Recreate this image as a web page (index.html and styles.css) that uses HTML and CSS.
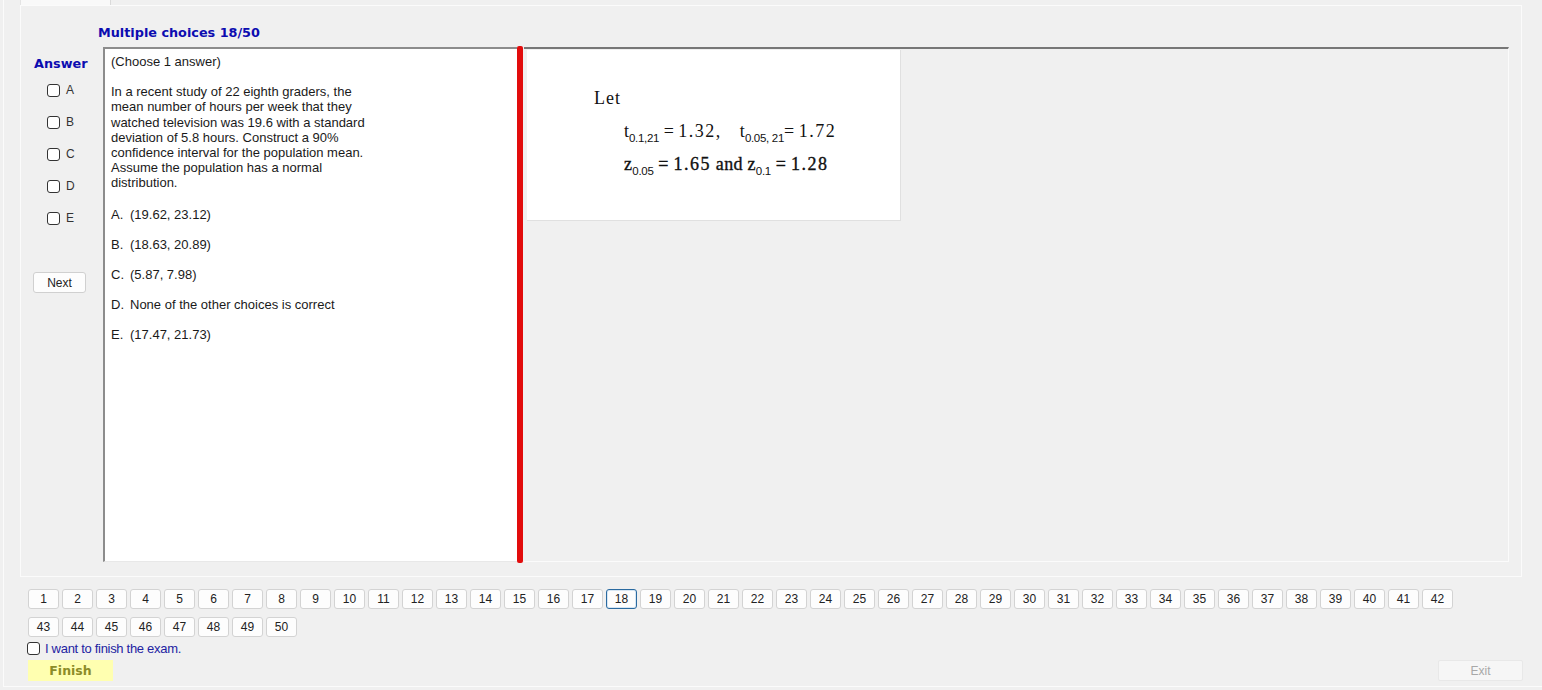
FILE: index.html
```html
<!DOCTYPE html>
<html>
<head>
<meta charset="utf-8">
<link rel="stylesheet" href="styles.css">
</head>
<body>
<div class="app">
  <div class="tabstrip"><div class="tab"></div></div>
  <div class="tabpage">
    <div class="title">Multiple choices 18/50</div>
    <div class="main">
      <div class="answers">
        <div class="answer-label">Answer</div>
        <div class="choice"><span class="box"></span><span>A</span></div>
        <div class="choice"><span class="box"></span><span>B</span></div>
        <div class="choice"><span class="box"></span><span>C</span></div>
        <div class="choice"><span class="box"></span><span>D</span></div>
        <div class="choice"><span class="box"></span><span>E</span></div>
        <div class="next">Next</div>
      </div>
      <div class="question">
        <p class="hint">(Choose 1 answer)</p>
        <p class="stem">In a recent study of 22 eighth graders, the<br>mean number of hours per week that they<br>watched television was 19.6 with a standard<br>deviation of 5.8 hours. Construct a 90%<br>confidence interval for the population mean.<br>Assume the population has a normal<br>distribution.</p>
        <div class="opt"><span class="letter">A.</span>(19.62, 23.12)</div>
        <div class="opt"><span class="letter">B.</span>(18.63, 20.89)</div>
        <div class="opt"><span class="letter">C.</span>(5.87, 7.98)</div>
        <div class="opt"><span class="letter">D.</span>None of the other choices is correct</div>
        <div class="opt"><span class="letter">E.</span>(17.47, 21.73)</div>
      </div>
      <div class="splitter"></div>
      <div class="pane">
        <div class="figure">
          <div class="let">Let</div>
          <div class="formula">t<sub>0.1,21</sub> = <span class="num">1.32,</span><span class="gap"></span>t<sub>0.05, 21</sub>= <span class="num">1.72</span></div>
          <div class="formula heavy">z<sub>0.05</sub> = <span class="num">1.65</span> and z<sub>0.1</sub> = <span class="num">1.28</span></div>
        </div>
      </div>
    </div>
  </div>
  <div class="nav">
    <div class="qbtn">1</div><div class="qbtn">2</div><div class="qbtn">3</div><div class="qbtn">4</div><div class="qbtn">5</div><div class="qbtn">6</div><div class="qbtn">7</div><div class="qbtn">8</div><div class="qbtn">9</div><div class="qbtn">10</div>
    <div class="qbtn">11</div><div class="qbtn">12</div><div class="qbtn">13</div><div class="qbtn">14</div><div class="qbtn">15</div><div class="qbtn">16</div><div class="qbtn">17</div><div class="qbtn current">18</div><div class="qbtn">19</div><div class="qbtn">20</div>
    <div class="qbtn">21</div><div class="qbtn">22</div><div class="qbtn">23</div><div class="qbtn">24</div><div class="qbtn">25</div><div class="qbtn">26</div><div class="qbtn">27</div><div class="qbtn">28</div><div class="qbtn">29</div><div class="qbtn">30</div>
    <div class="qbtn">31</div><div class="qbtn">32</div><div class="qbtn">33</div><div class="qbtn">34</div><div class="qbtn">35</div><div class="qbtn">36</div><div class="qbtn">37</div><div class="qbtn">38</div><div class="qbtn">39</div><div class="qbtn">40</div>
    <div class="qbtn">41</div><div class="qbtn">42</div><div class="qbtn">43</div><div class="qbtn">44</div><div class="qbtn">45</div><div class="qbtn">46</div><div class="qbtn">47</div><div class="qbtn">48</div><div class="qbtn">49</div><div class="qbtn">50</div>
  </div>
  <div class="confirm"><span class="box"></span><span>I want to finish the exam.</span></div>
  <div class="actions">
    <div class="finish">Finish</div>
    <div class="exit">Exit</div>
  </div>
</div>
</body>
</html>
```
FILE: styles.css
```css
* { box-sizing: border-box; }
html, body { margin: 0; padding: 0; }
body {
  background: #f0f0f0;
  font-family: "Liberation Sans", Arial, sans-serif;
  font-size: 12px;
  color: #1e1e1e;
  width: 1542px;
  height: 690px;
  overflow: hidden;
}
.app {
  margin-left: 3px;
  width: 1539px;
  height: 687px;
  border-left: 1px solid #fbfbfb;
  border-bottom: 1px solid #fbfbfb;
}
.tabstrip { height: 5px; }
.tab {
  margin-left: 16px;
  width: 91px;
  height: 5px;
  background: #f9f9f9;
  border-right: 1px solid #dadada;
  border-left: 1px solid #e4e4e4;
}
.tabpage {
  margin-left: 16px;
  width: 1502px;
  height: 572px;
  border: 1px solid #fbfbfb;
}
.title {
  margin: 19px 0 0 77px;
  height: 22px;
  font-family: "DejaVu Sans", Verdana, sans-serif;
  font-weight: bold;
  font-size: 12.8px;
  line-height: 15px;
  color: #0c0cb0;
}
.main {
  display: flex;
  height: 515px;
}
.answers {
  width: 82px;
  display: flex;
  flex-direction: column;
}
.answer-label {
  margin: 9px 0 3px 13px;
  font-family: "DejaVu Sans", Verdana, sans-serif;
  font-weight: bold;
  font-size: 12.8px;
  line-height: 15px;
  color: #0c0cb0;
}
.choice {
  height: 32px;
  display: flex;
  align-items: center;
  gap: 6px;
  padding-left: 26px;
  color: #333;
}
.box {
  display: inline-block;
  width: 13px;
  height: 13px;
  border: 1px solid #333;
  border-radius: 3px;
  background: #fff;
}
.next {
  margin: 38px 0 0 12px;
  width: 53px;
  height: 21px;
  line-height: 20px;
  text-align: center;
  background: #fdfdfd;
  border: 1px solid #d0d0d0;
  border-radius: 3px;
  color: #222;
  font-size: 12px;
}
.question {
  width: 414px;
  background: #fff;
  border-left: 2px solid #8c8c8c;
  border-top: 2px solid #8c8c8c;
  border-bottom: 1px solid #e8e8e8;
  padding: 5px 0 0 6px;
  line-height: 15.2px;
  font-size: 13px;
  color: #1a1a1a;
}
.question p { margin: 0 0 15px 0; }
.opt {
  height: 30.2px;
  line-height: 15px;
  padding-top: 1px;
}
.letter {
  display: inline-block;
  width: 19px;
}
.splitter {
  width: 6px;
  margin-top: -1px;
  margin-bottom: -1px;
  background: #e20c0c;
  border-radius: 2px;
}
.pane {
  width: 985px;
  border-top: 2px solid #777;
  border-right: 1px solid #fbfbfb;
  border-bottom: 1px solid #fbfbfb;
  margin-left: 1px;
  padding: 1px 0 0 3px;
}
.figure {
  width: 374px;
  height: 171px;
  background: #fff;
  border-right: 1px solid #e0e0e0;
  border-bottom: 1px solid #e0e0e0;
  font-family: "Liberation Serif", "Times New Roman", serif;
  color: #111;
  padding: 37px 0 0 67px;
}
.let {
  font-size: 18px;
  letter-spacing: 1px;
  line-height: 22px;
  height: 33px;
}
.formula {
  margin-left: 30px;
  font-size: 18px;
  line-height: 22px;
  height: 33px;
  white-space: nowrap;
}
.formula.heavy {
  -webkit-text-stroke: 0.35px #111;
  letter-spacing: 0.3px;
}
.formula sub {
  font-family: "Liberation Sans", Arial, sans-serif;
  font-size: 11.5px;
  letter-spacing: -0.3px;
  vertical-align: -5px;
  line-height: 0;
  -webkit-text-stroke: 0;
}
.num { letter-spacing: 1.5px; }
.gap { display: inline-block; width: 18px; }
.nav {
  margin: 12px 0 0 24px;
  width: 1430px;
  display: flex;
  flex-wrap: wrap;
  column-gap: 3px;
  row-gap: 8px;
}
.qbtn {
  width: 31px;
  height: 20px;
  line-height: 18px;
  text-align: center;
  background: #fdfdfd;
  border: 1px solid #d3d3d3;
  border-radius: 3px;
  font-size: 12px;
  color: #222;
}
.qbtn.current {
  border: 1px solid #2a6aa0;
  box-shadow: inset 0 0 0 1px #d6e6f4;
}
.confirm {
  margin: 4px 0 0 23px;
  display: flex;
  align-items: center;
  gap: 5px;
  height: 14px;
  color: #2323a2;
  font-size: 13px;
  letter-spacing: -0.3px;
}
.actions {
  margin-top: 5px;
  display: flex;
  justify-content: space-between;
  padding: 0 19px 0 24px;
}
.finish {
  width: 85px;
  height: 21px;
  line-height: 21px;
  text-align: center;
  background: #ffffb0;
  color: #8c8c28;
  font-family: "DejaVu Sans", Verdana, sans-serif;
  font-weight: bold;
  font-size: 12.5px;
}
.exit {
  width: 85px;
  height: 21px;
  line-height: 20px;
  text-align: center;
  background: #f6f6f6;
  border: 1px solid #e8e8e8;
  border-radius: 2px;
  color: #a8a8a8;
  font-size: 12px;
}
```
